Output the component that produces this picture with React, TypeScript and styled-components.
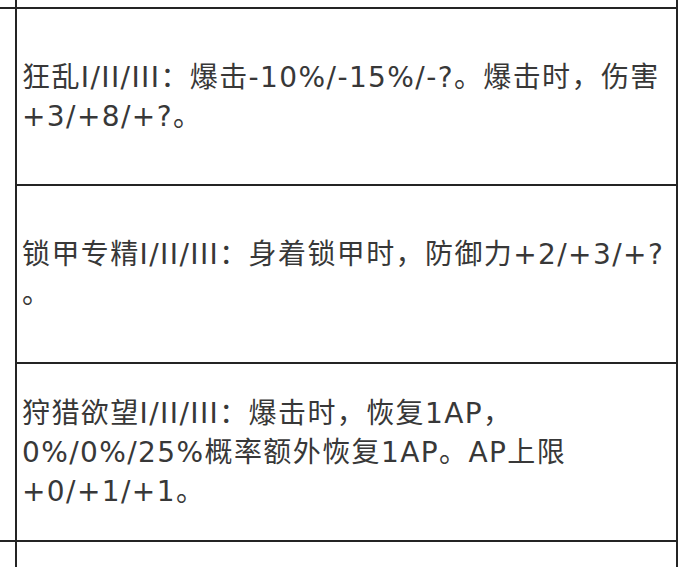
import styled, { createGlobalStyle } from 'styled-components';

const GlobalStyle = createGlobalStyle`
  html, body {
    margin: 0;
    padding: 0;
    background: #ffffff;
  }
`;

const LINE = '2px solid #242424';

const Frame = styled.div`
  width: 678px;
  height: 567px;
  display: flex;
  flex-direction: column;
  overflow: hidden;
  background: #ffffff;
  font-family: 'DejaVu Sans', 'Noto Sans CJK SC', sans-serif;
  color: #383838;
`;

const StubRow = styled.div<{ $closed?: boolean }>`
  display: flex;
  height: ${(p) => (p.$closed ? '7px' : 'auto')};
  flex: ${(p) => (p.$closed ? '0 0 auto' : '1 1 auto')};
  border-bottom: ${(p) => (p.$closed ? LINE : 'none')};
`;

const SideCell = styled.div`
  width: 15px;
  flex: 0 0 15px;
  border-right: ${LINE};
`;

const EmptyCell = styled.div`
  flex: 1;
  border-right: ${LINE};
`;

const Block = styled.div`
  display: flex;
  border-bottom: ${LINE};
`;

const Column = styled.div`
  flex: 1;
  display: flex;
  flex-direction: column;
`;

const Cell = styled.div<{ $h: number; $last?: boolean }>`
  height: ${(p) => p.$h}px;
  display: flex;
  flex-direction: column;
  justify-content: center;
  padding-left: 5px;
  border-right: ${LINE};
  border-bottom: ${(p) => (p.$last ? 'none' : LINE)};
`;

const Line = styled.div`
  font-size: 28px;
  line-height: 39px;
  white-space: nowrap;
  letter-spacing: 1.4px;
`;

const rows = [
  {
    h: 175,
    lines: ['狂乱I/II/III：爆击-10%/-15%/-?。爆击时，伤害', '+3/+8/+?。'],
  },
  {
    h: 176,
    lines: ['锁甲专精I/II/III：身着锁甲时，防御力+2/+3/+?', '。'],
  },
  {
    h: 176,
    lines: [
      '狩猎欲望I/II/III：爆击时，恢复1AP，',
      '0%/0%/25%概率额外恢复1AP。AP上限',
      '+0/+1/+1。',
    ],
  },
];

export default function App() {
  return (
    <>
      <GlobalStyle />
      <Frame>
        <StubRow $closed>
          <SideCell />
          <EmptyCell />
        </StubRow>
        <Block>
          <SideCell />
          <Column>
            {rows.map((row, i) => (
              <Cell key={i} $h={row.h} $last={i === rows.length - 1}>
                {row.lines.map((text, j) => (
                  <Line key={j}>{text}</Line>
                ))}
              </Cell>
            ))}
          </Column>
        </Block>
        <StubRow>
          <SideCell />
          <EmptyCell />
        </StubRow>
      </Frame>
    </>
  );
}
